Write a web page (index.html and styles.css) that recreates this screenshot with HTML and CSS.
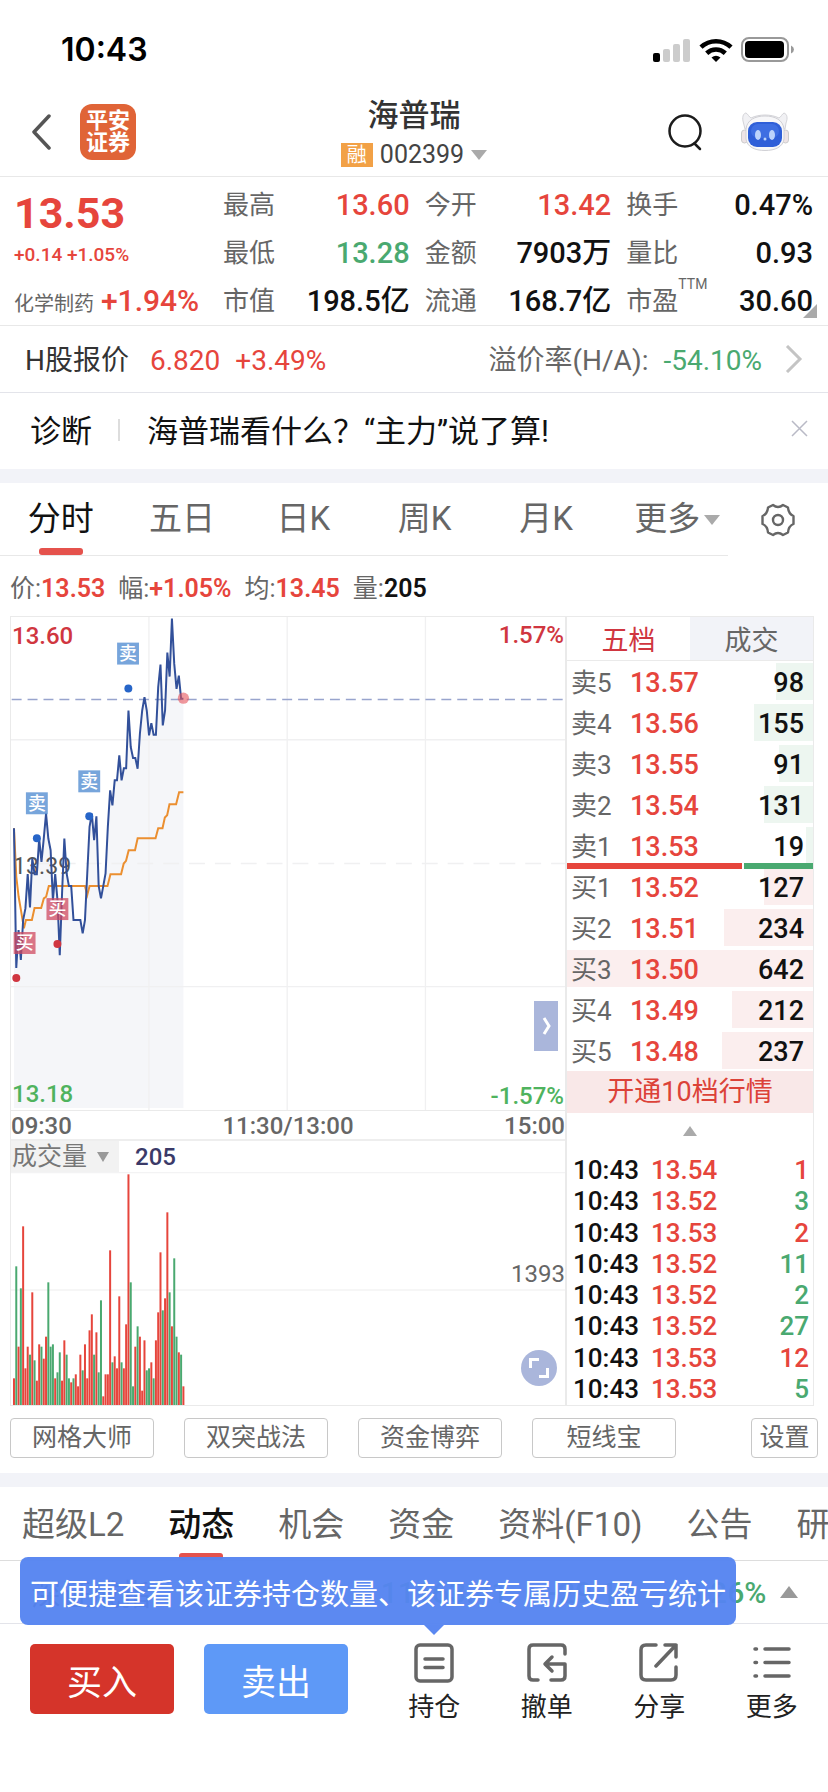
FILE: index.html
```html
<!DOCTYPE html>
<html lang="zh-CN">
<head>
    <meta charset="UTF-8">
    <meta name="viewport" content="width=device-width, initial-scale=1.0">
    <title>海普瑞 002399</title>
    <link rel="stylesheet" href="styles.css">
</head>
<body>
    <div class="status-bar">
        <span class="clock">10:43</span>
        <div class="status-icons">
            <svg width="38" height="24" viewBox="0 0 38 24">
                <rect x="0" y="15" width="7" height="9" rx="2" fill="#000"/>
                <rect x="10" y="11" width="7" height="13" rx="2" fill="#ccc"/>
                <rect x="20" y="6" width="7" height="18" rx="2" fill="#ccc"/>
                <rect x="30" y="1" width="7" height="23" rx="2" fill="#ccc"/>
            </svg>
            <svg width="34" height="24" viewBox="0 0 34 24" fill="none" stroke="#000" stroke-width="4.6">
                <path d="M2 9.200C10.500 1.200 23.500 1.200 32 9.200"/>
                <path d="M7.700 15.200C13 10.300 21 10.300 26.300 15.200"/>
                <path d="M12.500 19.500Q17 16 21.500 19.500L17 24Z" fill="#000" stroke="none"/>
            </svg>
            <svg width="54" height="26" viewBox="0 0 54 26">
                <rect x="1" y="1" width="46" height="23" rx="7" fill="none" stroke="#999" stroke-width="2"/>
                <rect x="4" y="4" width="39" height="17" rx="4" fill="#000"/>
                <path d="M50 8.500Q53 10 53 12.500T50 16.500Z" fill="#999"/>
            </svg>
        </div>
    </div>

    <header>
        <div class="header-side">
            <a class="back" href="#" aria-label="返回">
                <svg width="20" height="36" viewBox="0 0 20 36" fill="none" stroke="#555" stroke-width="3.500" stroke-linecap="round" stroke-linejoin="round"><path d="M18 2L3 18L18 34"/></svg>
            </a>
            <a class="logo" href="#">平安<br>证券</a>
        </div>
        <div class="header-title">
            <h1>海普瑞</h1>
            <button class="code"><span class="tag">融</span>002399<i class="arrow-down"></i></button>
        </div>
        <div class="header-side header-right">
            <button aria-label="搜索">
                <svg width="36" height="38" viewBox="0 0 36 38" fill="none" stroke="#1c1c1c" stroke-width="2.500" stroke-linecap="round"><circle cx="17" cy="18" r="15.500"/><path d="M26.500 30.500L32 36"/></svg>
            </button>
            <button aria-label="智能助手">
                <svg width="48" height="40" viewBox="0 0 48 40">
                    <path d="M2 9C1 4 3 1 5 1C7 2 8 5 10 6C18 2 30 2 38 6C40 5 41 2 43 1C46 2 47 6 45 11L44 17L4 17Z" fill="#f1f1f4" stroke="#d3d3d8"/>
                    <rect x="0.500" y="18" width="6" height="13" rx="3" fill="#eee4e6" stroke="#ccc"/>
                    <rect x="41.500" y="18" width="6" height="13" rx="3" fill="#eee4e6" stroke="#ccc"/>
                    <path d="M5 17C6 8 14 4 24 4S42 8 43 17V27C42 35 34 38.500 24 38.500S6 35 5 27Z" fill="#f7f7f9" stroke="#d0d0d5"/>
                    <rect x="7" y="10" width="34" height="25" rx="9" fill="#2f5fd8"/>
                    <rect x="10" y="12" width="28" height="14" rx="7" fill="#4a78ea" opacity=".6"/>
                    <ellipse cx="17" cy="23" rx="3" ry="5" fill="#bcd3fb"/>
                    <ellipse cx="31" cy="23" rx="3" ry="5" fill="#bcd3fb"/>
                    <circle cx="24" cy="27" r="1.500" fill="#bcd3fb"/>
                </svg>
            </button>
        </div>
    </header>

    <!-- 行情 -->
    <section class="quote">
        <div class="quote-price">
            <div class="price">13.53</div>
            <div class="change">+0.14 +1.05%</div>
            <div class="industry">化学制药 <b>+1.94%</b></div>
        </div>
        <dl class="stats">
            <div><dt>最高</dt><dd class="red">13.60</dd></div>
            <div><dt>今开</dt><dd class="red">13.42</dd></div>
            <div><dt>换手</dt><dd>0.47%</dd></div>
            <div><dt>最低</dt><dd class="green">13.28</dd></div>
            <div><dt>金额</dt><dd>7903万</dd></div>
            <div><dt>量比</dt><dd>0.93</dd></div>
            <div><dt>市值</dt><dd>198.5亿</dd></div>
            <div><dt>流通</dt><dd>168.7亿</dd></div>
            <div><dt>市盈<sup>TTM</sup></dt><dd>30.60</dd></div>
        </dl>
        <i class="corner"></i>
    </section>

    <a class="h-share" href="#">
        <span class="h-name">H股报价</span>
        <span class="red">6.820</span>
        <span class="red">+3.49%</span>
        <span class="premium">溢价率(H/A):</span>
        <span class="green">-54.10%</span>
        <svg width="18" height="28" viewBox="0 0 18 28" fill="none" stroke="#c4c4c4" stroke-width="3"><path d="M2 1L15 14L2 27"/></svg>
    </a>

    <div class="diagnose">
        <span>诊断</span>
        <i></i>
        <a href="#">海普瑞看什么？“主力”说了算!</a>
        <button aria-label="关闭">
            <svg width="17" height="17" viewBox="0 0 17 17" stroke="#b9bac6" stroke-width="1.500"><path d="M1 1L16 16M16 1L1 16"/></svg>
        </button>
    </div>

    <!-- 走势图 -->
    <div class="chart-nav">
        <nav class="period-tabs">
            <a class="active" href="#">分时</a>
            <a href="#">五日</a>
            <a href="#">日K</a>
            <a href="#">周K</a>
            <a href="#">月K</a>
            <a class="more" href="#">更多<i class="arrow-down"></i></a>
        </nav>
        <button class="gear" aria-label="图表设置">
            <svg width="36" height="36" viewBox="0 0 36 36" fill="none" stroke="#666" stroke-width="2.400" stroke-linejoin="round">
                <path d="M13 3Q18 7 23 3L28 5.500Q28.500 12 33.500 14V22Q28.500 24 28 30.500L23 33Q18 29 13 33L8 30.500Q7.500 24 2.500 22V14Q7.500 12 8 5.500Z"/>
                <circle cx="18" cy="18" r="5"/>
            </svg>
        </button>
    </div>

    <p class="chart-info">
        <span>价:<b class="red">13.53</b></span>
        <span>幅:<b class="red">+1.05%</b></span>
        <span>均:<b class="red">13.45</b></span>
        <span>量:<b>205</b></span>
    </p>

    <main class="panel">
        <div class="charts">
            <div class="price-chart">
                <svg class="plot" viewBox="31 49 1671 1482" preserveAspectRatio="none">
                    <polygon id="price-area" fill="#f5f6f9"/>
                    <g stroke="#f0f0f1" stroke-width="4">
                        <path d="M447 49V1531M864 49V1531M1281 49V1531M31 418H1702M31 1160H1702"/>
                        <path d="M100 790H1702" stroke-dasharray="48 30"/>
                    </g>
                    <path d="M33 297H1695" stroke="#98a4cd" stroke-width="5" stroke-dasharray="30 18"/>
                    <text x="37" y="821" font-size="70" fill="#555">13.39</text>
                    <polyline id="avg-line" fill="none" stroke="#eb8f30" stroke-width="6"/>
                    <polyline id="price-line" fill="none" stroke="#32509a" stroke-width="6"/>
                    <circle cx="551" cy="293" r="17" fill="#e6535b" opacity=".6"/>
                    <g id="marks"></g>
                </svg>
                <span class="label top-left">13.60</span>
                <span class="label top-right">1.57%</span>
                <span class="label bottom-left">13.18</span>
                <span class="label bottom-right">-1.57%</span>
                <button class="fold" aria-label="收起盘口">
                    <svg width="10" height="18" viewBox="0 0 10 18" fill="none" stroke="#fff" stroke-width="3"><path d="M2 1L7 9L2 17"/></svg>
                </button>
            </div>
            <div class="times"><span>09:30</span><span>11:30/13:00</span><span>15:00</span></div>
            <div class="volume-head">
                <button>成交量<i class="arrow-down"></i></button>
                <b>205</b>
            </div>
            <div class="volume-chart">
                <svg class="plot" viewBox="31 216 1671 699" preserveAspectRatio="none">
                    <path d="M31 218H1702M31 570H1702" stroke="#f3f3f4" stroke-width="4"/>
                    <g id="volume-bars"></g>
                </svg>
                <span class="label volume-mid">1393</span>
                <button class="expand" aria-label="全屏">
                    <svg width="20" height="20" viewBox="0 0 20 20" fill="none" stroke="#fff" stroke-width="3"><path d="M1.500 10V1.500H10M18.500 10V18.500H10"/></svg>
                </button>
            </div>
        </div>

        <div class="book">
            <div class="book-tabs">
                <button class="active">五档</button>
                <button>成交</button>
            </div>
            <ul class="levels sell">
                <li><i style="width: 15%"></i><span>卖5</span><b>13.57</b><em>98</em></li>
                <li><i style="width: 24%"></i><span>卖4</span><b>13.56</b><em>155</em></li>
                <li><i style="width: 14%"></i><span>卖3</span><b>13.55</b><em>91</em></li>
                <li><i style="width: 20%"></i><span>卖2</span><b>13.54</b><em>131</em></li>
                <li><i style="width: 3%"></i><span>卖1</span><b>13.53</b><em>19</em></li>
            </ul>
            <div class="ratio"><div><i style="width: 71%"></i><i></i></div></div>
            <ul class="levels buy">
                <li><i style="width: 20%"></i><span>买1</span><b>13.52</b><em>127</em></li>
                <li><i style="width: 36%"></i><span>买2</span><b>13.51</b><em>234</em></li>
                <li><i style="width: 100%"></i><span>买3</span><b>13.50</b><em>642</em></li>
                <li><i style="width: 33%"></i><span>买4</span><b>13.49</b><em>212</em></li>
                <li><i style="width: 37%"></i><span>买5</span><b>13.48</b><em>237</em></li>
            </ul>
            <a class="promo" href="#">开通10档行情</a>
            <button class="collapse" aria-label="收起"><i class="arrow-up"></i></button>
            <table class="trades">
                <tr><td>10:43</td><td>13.54</td><td class="red">1</td></tr>
                <tr><td>10:43</td><td>13.52</td><td class="green">3</td></tr>
                <tr><td>10:43</td><td>13.53</td><td class="red">2</td></tr>
                <tr><td>10:43</td><td>13.52</td><td class="green">11</td></tr>
                <tr><td>10:43</td><td>13.52</td><td class="green">2</td></tr>
                <tr><td>10:43</td><td>13.52</td><td class="green">27</td></tr>
                <tr><td>10:43</td><td>13.53</td><td class="red">12</td></tr>
                <tr><td>10:43</td><td>13.53</td><td class="green">5</td></tr>
            </table>
        </div>
    </main>

    <div class="tools">
        <button>网格大师</button>
        <button>双突战法</button>
        <button>资金博弈</button>
        <button>短线宝</button>
        <button class="set">设置</button>
    </div>

    <nav class="news-tabs">
        <a href="#">超级L2</a>
        <a class="active" href="#">动态</a>
        <a href="#">机会</a>
        <a href="#">资金</a>
        <a href="#">资料(F10)</a>
        <a href="#">公告</a>
        <a href="#">研报</a>
    </nav>

    <div class="index-row">
        <span class="index-name">深证成指</span>
        <b>11163.41</b>
        <b>-29.17</b>
        <b>-0.26%</b>
        <i class="arrow-up"></i>
        <div class="tooltip">可便捷查看该证券持仓数量、该证券专属历史盈亏统计</div>
    </div>

    <footer>
        <button class="trade-btn buy-btn">买入</button>
        <button class="trade-btn sell-btn">卖出</button>
        <div class="actions">
            <a href="#">
                <svg width="40" height="40" viewBox="0 0 40 40"><rect x="2" y="2" width="36" height="36" rx="4"/><path d="M11 16H29M11 24.500H29"/></svg>
                持仓
            </a>
            <a href="#">
                <svg width="40" height="40" viewBox="0 0 40 40"><path d="M11 37H6Q2 37 2 33V6Q2 2 6 2H34Q38 2 38 6V11M24 37H34Q38 37 38 33V21H19M25 14L18 21L25 28"/></svg>
                撤单
            </a>
            <a href="#">
                <svg width="40" height="40" viewBox="0 0 40 40"><path d="M17 2H7Q2 2 2 7V32Q2 37 7 37H32Q37 37 37 32V24M26 2H37V14M37 2L17 23"/></svg>
                分享
            </a>
            <a href="#">
                <svg width="40" height="40" viewBox="0 0 40 40"><path d="M3 6H4.500M13 6H37M3 19.500H4.500M13 19.500H37M3 33H4.500M13 33H37"/></svg>
                更多
            </a>
        </div>
    </footer>

    <script src="script.js"></script>
</body>
</html>
```
FILE: styles.css
```css
/* 全局 */
* {
    box-sizing: border-box;
}

body {
    margin: 0;
    background-color: #fff;
    color: #111;
    font-family: Roboto, "Noto Sans CJK SC", sans-serif;
    overflow-x: hidden;
}

a {
    color: inherit;
    text-decoration: none;
}

button {
    margin: 0;
    padding: 0;
    border: none;
    background: none;
    color: inherit;
    font: inherit;
}

ul, dl, dd, p {
    margin: 0;
    padding: 0;
    list-style: none;
}

svg {
    display: block;
}

.red {
    color: #e6453c;
}

.green {
    color: #4aa970;
}

.arrow-down,
.arrow-up {
    display: inline-block;
    border: 8px solid transparent;
    border-bottom: 0;
    border-top: 10px solid #aaa;
}

.arrow-up {
    border-top: 0;
    border-bottom: 10px solid #aaa;
}

/* 状态栏 */
.status-bar {
    display: flex;
    justify-content: space-between;
    align-items: center;
    height: 88px;
    padding: 11px 33px 0 61px;
}

.clock {
    font-family: Inter, sans-serif;
    font-size: 32px;
    font-weight: 600;
    color: #000;
}

.status-icons {
    display: flex;
    align-items: center;
    gap: 8px;
}

/* 标题 */
header {
    display: grid;
    grid-template-columns: 1fr auto 1fr;
    align-items: center;
    height: 89px;
    border-bottom: 1px solid #e8e8e8;
}

.header-side {
    display: flex;
    align-items: center;
    gap: 29px;
    padding-left: 31px;
}

.header-right {
    justify-content: flex-end;
    gap: 37px;
    padding: 0 39px 0 0;
}

.logo {
    width: 56px;
    padding: 6px 0;
    border-radius: 12px;
    background-color: #e06437;
    color: #fff;
    font-size: 22px;
    font-weight: 700;
    line-height: 22px;
    text-align: center;
}

.header-title {
    padding-top: 2px;
    text-align: center;
}

h1 {
    margin: 0;
    color: #333;
    font-size: 31px;
    font-weight: 500;
    line-height: 44px;
}

.code {
    display: flex;
    align-items: center;
    gap: 7px;
    color: #444;
    font-size: 25px;
    line-height: 34px;
}

.tag {
    width: 32px;
    background-color: #f2a146;
    color: #fff;
    font-size: 20px;
    line-height: 24px;
    text-align: center;
}

/* 行情 */
.quote {
    position: relative;
    display: flex;
    height: 149px;
    border-bottom: 1px solid #e8e8e8;
}

.quote-price {
    width: 223px;
    padding: 10px 0 0 14px;
    color: #e6453c;
    white-space: nowrap;
}

.price {
    font-size: 43px;
    font-weight: 700;
    line-height: 52px;
}

.change {
    font-size: 19px;
    font-weight: 500;
    line-height: 32px;
}

.industry {
    color: #666;
    font-size: 20px;
    line-height: 60px;
}

.industry b {
    margin-left: 2px;
    color: #e6453c;
    font-size: 30px;
    font-weight: 500;
}

.stats {
    display: grid;
    flex: 1;
    grid-template-columns: repeat(3, 1fr);
    column-gap: 15px;
    align-content: start;
    padding: 4px 15px 0 0;
}

.stats div {
    display: flex;
    justify-content: space-between;
    height: 48px;
    line-height: 48px;
}

.stats dt {
    position: relative;
    color: #666;
    font-size: 26px;
}

.stats dd {
    font-size: 29px;
    font-weight: 500;
}

.stats sup {
    position: absolute;
    left: 100%;
    top: 0;
    font-size: 14px;
    line-height: 14px;
}

.corner {
    position: absolute;
    right: 11px;
    bottom: 7px;
    border-left: 14px solid transparent;
    border-bottom: 14px solid #aaa;
}

/* H股 */
.h-share {
    display: flex;
    align-items: center;
    gap: 15px;
    height: 67px;
    padding: 4px 25px 0;
    border-bottom: 1px solid #e3e4ea;
    font-size: 28px;
    line-height: 40px;
}

.h-name {
    margin-right: 6px;
    color: #333;
}

.premium {
    margin-left: auto;
    color: #666;
}

.h-share svg {
    margin: 0 0 4px 8px;
}

/* 诊断 */
.diagnose {
    display: flex;
    align-items: center;
    height: 90px;
    padding: 0 20px 6px 30px;
    border-bottom: 14px solid #f2f3f8;
    font-size: 31px;
}

.diagnose i {
    width: 2px;
    height: 22px;
    margin: 4px 27px 0 26px;
    background-color: #ddd;
}

.diagnose button {
    margin-left: auto;
}

/* 周期 */
.chart-nav {
    display: flex;
    height: 73px;
}

.period-tabs {
    display: grid;
    flex: 1;
    grid-template-columns: repeat(6, 1fr);
    border-bottom: 1px solid #e8e8e8;
    color: #666;
    font-size: 33px;
    line-height: 72px;
    text-align: center;
    white-space: nowrap;
}

.period-tabs .more {
    padding-left: 20px;
}

.period-tabs i {
    margin: 0 0 5px 4px;
}

.active {
    position: relative;
    color: #111;
}

.period-tabs .active::after,
.news-tabs .active::after {
    content: "";
    position: absolute;
    left: 50%;
    bottom: 0;
    width: 44px;
    height: 7px;
    margin-left: -22px;
    border-radius: 3px;
    background-color: #e5524c;
}

.gear {
    width: 100px;
    padding-left: 32px;
}

.chart-info {
    display: flex;
    gap: 13px;
    height: 60px;
    padding-left: 10px;
    color: #666;
    font-size: 25px;
    line-height: 66px;
}

.chart-info b {
    font-weight: 600;
}

.chart-info b:not(.red) {
    color: #111;
}

/* 图表区 */
.panel {
    display: flex;
    margin: 0 14px 0 10px;
    border: 1px solid #eaeaea;
}

.charts {
    flex: 1;
    border-right: 2px solid #eaeaea;
}

.price-chart,
.volume-chart {
    position: relative;
}

.plot {
    width: 100%;
}

.price-chart .plot {
    height: 493px;
}

.volume-chart .plot {
    height: 233px;
}

.label {
    position: absolute;
    font-size: 24px;
    font-weight: 500;
    line-height: 28px;
}

.top-left {
    left: 1px;
    top: 5px;
    color: #d03640;
}

.top-right {
    right: 1px;
    top: 4px;
    color: #d03640;
}

.bottom-left {
    left: 1px;
    bottom: 2px;
    color: #4fb35e;
}

.bottom-right {
    right: 1px;
    bottom: 0;
    color: #4fb35e;
}

.volume-mid {
    right: 0;
    top: 88px;
    color: #666;
    font-weight: 400;
}

.fold {
    position: absolute;
    right: 7px;
    bottom: 59px;
    width: 24px;
    height: 50px;
    padding-left: 8px;
    background-color: #aab6db;
}

.expand {
    position: absolute;
    right: 8px;
    bottom: 19px;
    width: 36px;
    height: 36px;
    padding-left: 8px;
    border-radius: 50%;
    background-color: #aab6db;
}

.times {
    display: flex;
    justify-content: space-between;
    height: 31px;
    border-top: 1px solid #eaeaea;
    border-bottom: 2px solid #eee;
    color: #666;
    font-size: 24px;
    font-weight: 500;
    line-height: 31px;
}

.volume-head {
    display: flex;
    align-items: center;
    gap: 16px;
    height: 31px;
}

.volume-head button {
    display: flex;
    align-items: center;
    gap: 10px;
    padding: 0 10px 0 1px;
    background-color: #f2f2f2;
    color: #777;
    font-size: 25px;
    line-height: 31px;
}

.volume-head i {
    border-left-width: 6px;
    border-right-width: 6px;
    border-top-color: #999;
}

.volume-head b {
    color: #3b3a68;
    font-size: 24px;
    font-weight: 500;
}

/* 盘口 */
.book {
    display: flex;
    flex-direction: column;
    width: 246px;
}

.book-tabs {
    display: flex;
    height: 44px;
    margin-bottom: 2px;
    border-bottom: 1px solid #eaeaea;
    font-size: 27px;
    line-height: 43px;
}

.book-tabs button {
    flex: 1;
    padding-top: 3px;
    background-color: #f2f3f8;
    color: #666;
}

.book-tabs .active {
    background-color: #fff;
    color: #d03640;
}

.levels {
    display: flex;
    flex-direction: column;
    gap: 4px;
}

.levels li {
    position: relative;
    display: flex;
    height: 37px;
    padding: 2px 9px 0 4px;
    font-size: 27px;
    line-height: 37px;
}

.levels i {
    position: absolute;
    top: 0;
    right: 0;
    height: 37px;
    background-color: #fbeeee;
}

.sell i {
    background-color: #edf6f0;
}

.levels span,
.levels b,
.levels em {
    position: relative;
}

.levels span {
    width: 59px;
    color: #666;
    font-size: 26px;
}

.levels b {
    color: #e6453c;
    font-weight: 500;
}

.levels em {
    margin-left: auto;
    font-style: normal;
    font-weight: 500;
}

.ratio {
    position: relative;
    height: 4px;
}

.ratio div {
    position: absolute;
    top: -1px;
    z-index: 1;
    display: flex;
    gap: 2px;
    width: 100%;
}

.ratio i {
    height: 6px;
    background-color: #e6453c;
}

.ratio i:last-child {
    flex: 1;
    background-color: #4aa970;
}

.promo {
    margin-top: 2px;
    background-color: #f9e8e8;
    color: #dc4238;
    font-size: 27px;
    line-height: 42px;
    text-align: center;
}

.collapse {
    height: 42px;
    padding-bottom: 8px;
}

.collapse i {
    border-left-width: 7px;
    border-right-width: 7px;
}

.trades {
    width: 100%;
    height: 250px;
    border-collapse: collapse;
    font-size: 26px;
    font-weight: 500;
    line-height: 31px;
}

.trades td {
    padding: 0;
}

.trades td:first-child {
    width: 84px;
    padding-left: 6px;
}

.trades td:nth-child(2) {
    color: #e6453c;
}

.trades td:last-child {
    padding-right: 4px;
    text-align: right;
}

/* 工具 */
.tools {
    display: flex;
    gap: 30px;
    padding: 12px 10px 15px;
    border-bottom: 14px solid #f2f3f8;
}

.tools button {
    width: 144px;
    height: 40px;
    border: 1px solid #c8c8c8;
    border-radius: 4px;
    color: #666;
    font-size: 25px;
    line-height: 38px;
    white-space: nowrap;
}

.tools .set {
    width: 67px;
    margin-left: auto;
}

/* 资讯 */
.news-tabs {
    display: flex;
    gap: 44px;
    height: 74px;
    padding-left: 22px;
    border-bottom: 1px solid #ddd;
    color: #666;
    font-size: 33px;
    line-height: 76px;
    overflow: hidden;
    white-space: nowrap;
}

.news-tabs .active {
    font-weight: 500;
}

.index-row {
    position: relative;
    display: flex;
    justify-content: space-between;
    align-items: center;
    height: 63px;
    padding: 0 30px 0 31px;
    border-bottom: 1px solid #e3e4ea;
    color: #4aa970;
    font-size: 30px;
}

.index-name {
    color: #333;
}

.index-row b {
    font-weight: 500;
}

.index-row b:nth-of-type(1) {
    margin-left: 190px;
}

.index-row .arrow-up {
    margin-left: -26px;
    border-width: 0 9px 12px;
    border-bottom-color: #999;
}

.tooltip {
    position: absolute;
    left: 20px;
    top: -4px;
    padding: 8px 10px 0;
    border-radius: 8px;
    background-color: rgba(85, 132, 240, 0.96);
    color: #fff;
    font-size: 29px;
    line-height: 60px;
    white-space: nowrap;
}

.tooltip::after {
    content: "";
    position: absolute;
    left: 404px;
    top: 100%;
    border: 10px solid transparent;
    border-bottom: 0;
    border-top-color: #5b88f1;
}

/* 底部 */
footer {
    display: flex;
    gap: 30px;
    padding: 20px 0 40px 30px;
}

.trade-btn {
    width: 144px;
    height: 70px;
    border-radius: 5px;
    color: #fff;
    font-size: 35px;
}

.buy-btn {
    background-color: #d5342a;
}

.sell-btn {
    background-color: #5e99f7;
}

.actions {
    display: grid;
    flex: 1;
    grid-template-columns: repeat(4, 1fr);
    color: #222;
    font-size: 26px;
    line-height: 48px;
    text-align: center;
}

.actions svg {
    margin: -1px auto 0;
    fill: none;
    stroke: #666;
    stroke-width: 3.5;
    stroke-linecap: round;
    stroke-linejoin: round;
}
```
FILE: script.js
```js
// 每分钟一个点，间隔 6.9
const STEP = 6.905;
const START = 40;
const BASE = 915;

const prices = [
    684, 1104, 990, 1080, 960, 925, 822, 922, 775, 822, 822, 715, 785, 715, 640,
    715, 750, 900, 822, 900, 1066, 880, 715, 820, 858, 858, 960, 960, 960, 960,
    1000, 960, 820, 680, 640, 720, 648, 858, 895, 858, 820, 680, 570, 615, 540,
    540, 465, 540, 504, 504, 330, 440, 473, 473, 505, 400, 330, 290, 330, 405,
    368, 403, 403, 260, 192, 375, 330, 156, 228, 54, 190, 265, 225, 295, 295
];

const average = '40,684 47,830 54,890 61,930 70,985 76,960 94,960 102,924 122,924 130,895 137,890 145,858 254,858 261,885 268,858 322,858 331,822 363,822 371,790 378,782 386,750 405,750 413,714 467,714 475,684 488,684 495,652 502,645 509,612 529,612 538,576 551,576';

// r 涨 / g 跌
const volumes = 'r80 g416 r175 g350 r536 r110 r175 g151 r338 g134 r73 r182 g175 r139 r205 g368 g175 g182 r80 g98 g158 r73 r194 g151 g80 r68 g80 r92 r56 r151 g104 r182 r80 r224 r272 g151 r218 g98 g314 r26 r92 r92 r464 g128 r146 r110 r326 g128 r110 r242 r692 g368 g56 r175 g236 r205 r43 r194 g104 g110 r128 g80 r194 r278 r458 g284 r320 r578 g338 r236 g440 g205 r158 g151 r56'.split(' ');

const marks = [
    { text: '卖', x: 351, y: 126, cx: 385, cy: 264 },
    { text: '卖', x: 234, y: 510, cx: 267, cy: 648 },
    { text: '卖', x: 76, y: 576, cx: 109, cy: 714 },
    { text: '买', x: 138, y: 894, cx: 171, cy: 1032 },
    { text: '买', x: 39, y: 996, cx: 47, cy: 1134 }
];

const points = prices.map((y, i) => `${(START + i * STEP).toFixed(1)},${y}`).join(' ');
document.getElementById('price-line').setAttribute('points', points);
document.getElementById('price-area').setAttribute('points', `40,1525 ${points} 551,1525`);
document.getElementById('avg-line').setAttribute('points', average);

document.getElementById('marks').innerHTML = marks.map(m => {
    const sell = m.text === '卖';
    return `<rect x="${m.x}" y="${m.y}" width="66" height="66" fill="${sell ? '#4a87cf' : '#cf4a60'}" opacity=".75"/>
        <text x="${m.x + 33}" y="${m.y + 52}" font-size="54" font-weight="500" fill="#fff" text-anchor="middle">${m.text}</text>
        <circle cx="${m.cx}" cy="${m.cy}" r="12" fill="${sell ? '#2765c8' : '#d03640'}"/>`;
}).join('');

document.getElementById('volume-bars').innerHTML = volumes.map((v, i) => {
    const height = Number(v.slice(1));
    const color = v[0] === 'r' ? '#e6453c' : '#4aa970';
    return `<rect x="${(START - 3 + i * STEP).toFixed(1)}" y="${BASE - height}" width="6" height="${height}" fill="${color}"/>`;
}).join('');
```
